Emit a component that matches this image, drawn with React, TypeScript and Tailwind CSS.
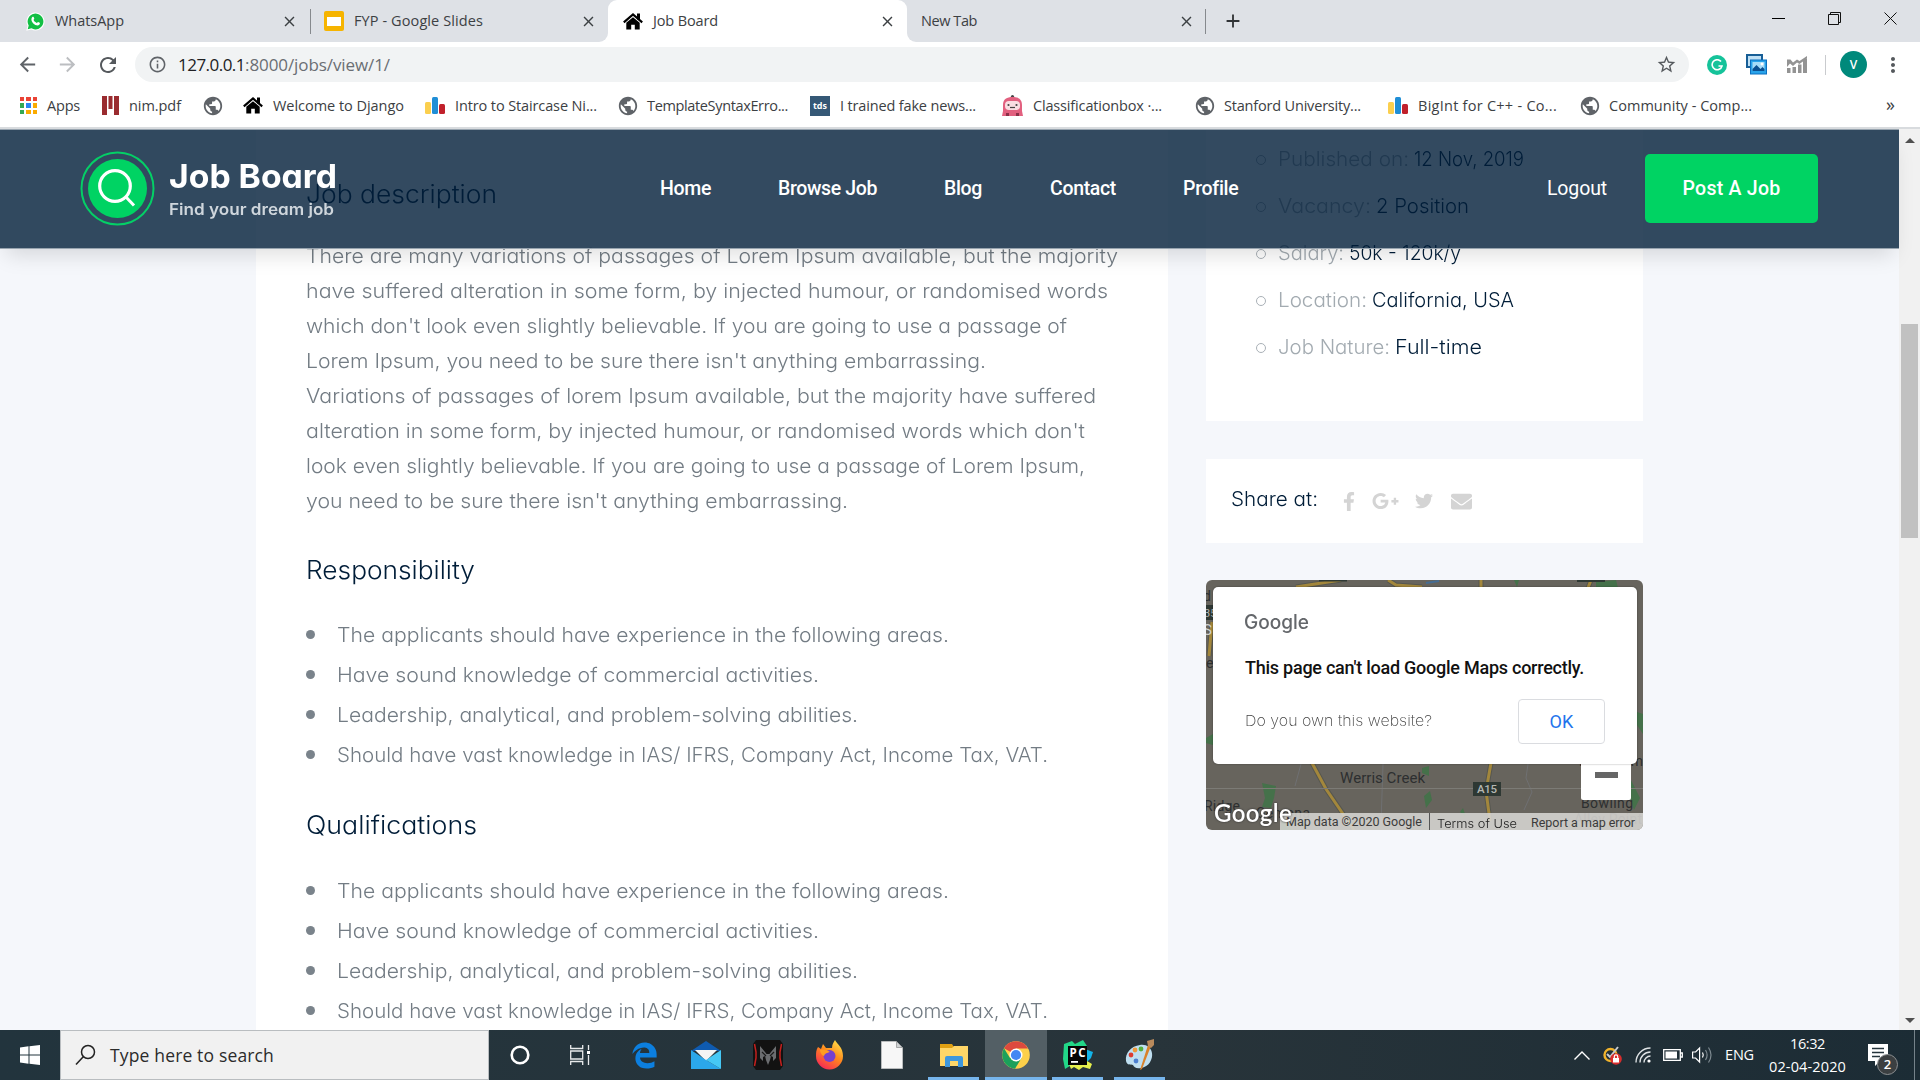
import React, { useLayoutEffect, useRef } from "react";
import { FaFacebookF, FaGooglePlusG, FaTwitter, FaEnvelope, FaEdgeLegacy } from "react-icons/fa";
import { MdArrowBack, MdArrowForward, MdRefresh, MdInfoOutline, MdStarBorder, MdMoreVert, MdPublic, MdClose, MdAdd } from "react-icons/md";

/* A single line of text whose tracking is adjusted so that it spans `w` pixels. */
function Line({ w, className = "", children }: { w: number; className?: string; children: string }) {
  const ref = useRef<HTMLSpanElement>(null);
  useLayoutEffect(() => {
    const el = ref.current;
    if (!el) return;
    el.style.letterSpacing = "0px";
    const natural = el.getBoundingClientRect().width;
    el.style.letterSpacing = `${(w - natural) / children.length}px`;
  }, [w, children]);
  return (
    <span ref={ref} className={`inline-block shrink-0 whitespace-nowrap ${className}`}>
      {children}
    </span>
  );
}

/* A single line of text whose letters are widened so that it spans `w` pixels. */
function Wide({ w, className = "", children }: { w: number; className?: string; children: string }) {
  const ref = useRef<HTMLSpanElement>(null);
  useLayoutEffect(() => {
    const el = ref.current;
    if (!el) return;
    el.style.transform = "none";
    const natural = el.getBoundingClientRect().width;
    el.style.transform = `scaleX(${w / natural})`;
  }, [w, children]);
  return (
    <span className={`block shrink-0 whitespace-nowrap ${className}`} style={{ width: w }}>
      <span ref={ref} className="inline-block origin-left">
        {children}
      </span>
    </span>
  );
}

const paragraph: [string, number][] = [
  ["There are many variations of passages of Lorem Ipsum available, but the majority", 812],
  ["have suffered alteration in some form, by injected humour, or randomised words", 802],
  ["which don't look even slightly believable. If you are going to use a passage of", 761],
  ["Lorem Ipsum, you need to be sure there isn't anything embarrassing.", 680],
  ["Variations of passages of lorem Ipsum available, but the majority have suffered", 790],
  ["alteration in some form, by injected humour, or randomised words which don't", 779],
  ["look even slightly believable. If you are going to use a passage of Lorem Ipsum,", 779],
  ["you need to be sure there isn't anything embarrassing.", 542],
];

const bullets: [string, number][] = [
  ["The applicants should have experience in the following areas.", 612],
  ["Have sound knowledge of commercial activities.", 482],
  ["Leadership, analytical, and problem-solving abilities.", 521],
  ["Should have vast knowledge in IAS/ IFRS, Company Act, Income Tax, VAT.", 711],
];

const summary: [string, number, string, number][] = [
  ["Published on:", 131, "12 Nov, 2019", 110],
  ["Vacancy:", 93, "2 Position", 93],
  ["Salary:", 66, "50k - 120k/y", 112],
  ["Location:", 89, "California, USA", 142],
  ["Job Nature:", 112, "Full-time", 87],
];

function Bars() {
  return (
    <svg width="20" height="17" viewBox="0 0 20 17">
      <rect x="0" y="5" width="6" height="12" rx="1.5" fill="#fbcf4e" />
      <rect x="7" y="0" width="6" height="17" rx="1.5" fill="#1f8ed6" />
      <rect x="14" y="7" width="6" height="10" rx="1.5" fill="#c1202b" />
    </svg>
  );
}

function AppsIcon() {
  const colors = ["#ea4335", "#ea4335", "#ea4335", "#34a853", "#2a85f4", "#fbab00", "#34a853", "#fbab00", "#fbab00"];
  return (
    <div className="grid h-[17px] w-[17px] grid-cols-3 gap-[2px]">
      {colors.map((c, i) => (
        <span key={i} style={{ backgroundColor: c }} />
      ))}
    </div>
  );
}

function NimIcon() {
  return (
    <svg width="17" height="19" viewBox="0 0 17 19" fill="#9a2b2f">
      <path d="M0 0h5v19H0zM6.5 0h4v13h-4zM12 0h5v19h-5z" />
    </svg>
  );
}

function RobotIcon() {
  return (
    <svg width="21" height="21" viewBox="0 0 21 21">
      <circle cx="10.5" cy="1.6" r="1.6" fill="#444" />
      <path d="M1 10C1 4 5 2 10.500 2S20 4 20 10v6l1 5H0l1-5z" fill="#e2607f" />
      <rect x="3" y="6" width="15" height="9" rx="4" fill="#f9dde2" />
      <circle cx="6.500" cy="10" r="1.100" fill="#444" />
      <circle cx="14.500" cy="10" r="1.100" fill="#444" />
      <path d="M8 12.500h5" stroke="#444" strokeWidth="1.200" />
      <path d="M4 18h3v3H4zM14 18h3v3h-3z" fill="#8c3048" />
    </svg>
  );
}

const Globe = () => <MdPublic className="-mx-[2px] size-[22px] text-[#5f6368]" />;

function House() {
  return (
    <svg className="shrink-0" width="20" height="17" viewBox="0 0 20 17">
      <path d="M14 .5h3v6h-3z" />
      <path d="M.8 9.300L10 1.500l9.200 7.800" fill="none" stroke="#000" strokeWidth="2.200" />
      <path d="M3.300 9.700L10 4.200l6.700 5.500V16.500H11.800v-4.700H8.200v4.700H3.300z" />
    </svg>
  );
}

function WhatsAppIcon() {
  return (
    <svg className="shrink-0" width="19" height="19" viewBox="0 0 19 19">
      <path d="M.3 18.700l1.300-4.900A9 9 0 1 1 5.200 17.400z" fill="#fff" />
      <path d="M1.700 17.300l1-3.800A7.900 7.900 0 1 1 5.500 16.300z" fill="#12bf44" />
      <path d="M6.300 5c.5-.5 1.100-.4 1.300.1l.7 1.500c.1.400-.7 1.100-.7 1.400.6 1.300 1.700 2.300 3.100 2.900.4.100 1-1 1.400-.9l1.600.8c.6.500 0 2.500-2 2.600-3.200-.1-6.300-3.300-6.300-6 0-1 .4-1.900.9-2.400z" fill="#fff" />
    </svg>
  );
}

function Bookmark({ icon, label, w, className }: { icon: React.ReactNode; label?: string; w?: number; className: string }) {
  return (
    <div className={`flex shrink-0 items-center ${className}`}>
      {icon}
      {label && w && (
        <Line w={w} className="ml-[10px] text-[14.500px] text-[#3c4043]">
          {label}
        </Line>
      )}
    </div>
  );
}

const CloseTab = ({ className = "" }: { className?: string }) => <MdClose className={`size-[17px] shrink-0 text-[#3c4043] ${className}`} />;

function TabStrip() {
  return (
    <div className="flex h-[42px] items-center bg-[#dee1e6] text-[14.500px] text-[#3c4043]">
      <div className="flex h-full w-[310px] items-center pl-[26px]">
        <WhatsAppIcon />
        <Line w={69} className="ml-[10px]">WhatsApp</Line>
        <CloseTab className="mr-[12px] ml-auto" />
      </div>
      <div className="h-[25px] w-px bg-[#86898d]" />
      <div className="flex h-full w-[297px] items-center pl-[13px]">
        <div className="flex h-[20px] w-[20px] items-center justify-center rounded-[2px] bg-[#f6b400]">
          <div className="h-[9px] w-[14px] bg-white" />
        </div>
        <Line w={129} className="ml-[10px]">FYP - Google Slides</Line>
        <CloseTab className="mr-[11px] ml-auto" />
      </div>
      <div className="relative flex h-full w-[299px] items-center rounded-t-[9px] bg-white pl-[15px]">
        <div className="absolute bottom-0 -left-[9px] size-[9px] bg-white">
          <div className="size-full rounded-br-[9px] bg-[#dee1e6]" />
        </div>
        <div className="absolute -right-[9px] bottom-0 size-[9px] bg-white">
          <div className="size-full rounded-bl-[9px] bg-[#dee1e6]" />
        </div>
        <House />
        <Line w={65} className="ml-[10px]">Job Board</Line>
        <CloseTab className="mr-[11px] ml-auto" />
      </div>
      <div className="flex h-full w-[298px] items-center pl-[14px]">
        <Line w={56}>New Tab</Line>
        <CloseTab className="mr-[10px] ml-auto" />
      </div>
      <div className="h-[25px] w-px bg-[#86898d]" />
      <MdAdd className="ml-[16px] size-[22px] text-[#303336]" />
      <div className="mr-[23px] ml-auto flex items-center gap-[43px] pb-[6px]">
        <div className="h-px w-[13px] bg-black" />
        <svg width="13" height="13" viewBox="0 0 13 13" fill="none" stroke="#111">
          <path d="M.5 2.500h10v10H.5zM2.500 2.500v-2h10v10h-2" />
        </svg>
        <svg width="13" height="13" viewBox="0 0 13 13" fill="none" stroke="#111">
          <path d="M.5.5l12 12M12.500.5l-12 12" />
        </svg>
      </div>
    </div>
  );
}

function AddressBar() {
  return (
    <div className="flex h-[45px] items-center bg-white">
      <MdArrowBack className="ml-[16px] size-[23px] text-[#5f6368]" />
      <MdArrowForward className="ml-[17px] size-[23px] text-[#bcbec1]" />
      <MdRefresh className="ml-[17px] size-[24px] text-[#55595d]" />
      <div className="ml-[15px] flex h-[35px] w-[1554px] items-center rounded-full bg-[#f1f3f4]">
        <MdInfoOutline className="ml-[13px] size-[19px] text-[#5f6368]" />
        <Line w={67} className="ml-[11px] text-[17px] text-[#202124]">127.0.0.1</Line>
        <Line w={145} className="text-[17px] text-[#6a6e73]">:8000/jobs/view/1/</Line>
        <MdStarBorder className="mr-[12px] ml-auto size-[21px] text-[#55595d]" />
      </div>
      <div className="ml-[18px] flex size-[20px] items-center justify-center rounded-full bg-[#15c39a]">
        <svg width="12" height="12" viewBox="0 0 12 12" fill="none" stroke="#fff" strokeWidth="1.600">
          <path d="M10 2.500A5 5 0 1 0 11 7H7.500" />
        </svg>
      </div>
      <svg className="ml-[19px]" width="21" height="21" viewBox="0 0 21 21">
        <rect x="1" y="1" width="15" height="12" fill="#bfe0f5" stroke="#175e96" strokeWidth="2" />
        <rect x="4.500" y="6" width="16" height="14" fill="#29a3ea" stroke="#0b6fc0" />
        <rect x="6.500" y="8" width="12" height="9" fill="#a5dbf8" />
        <path d="M6.500 17v-2l4-4 4 4 2-2 2 2v2z" fill="#0a4f91" />
        <circle cx="16" cy="10" r="1.500" fill="#fff" />
      </svg>
      <svg className="ml-[20px]" width="20" height="17" viewBox="0 0 20 17" fill="#939393">
        <path d="M0 12h3.500v5H0zM5.500 11H9v6H5.500zM11 8.500h3.500V17H11zM16 3h4v14h-4z" />
        <path d="M0 3.500h3.500l2.500 3 4-3 2.500 1.500L20 0v2.500L12.500 8 10 6.500 6 10 3 7.500 0 11z" />
      </svg>
      <div className="ml-[18px] h-[20px] w-px bg-[#c9cbce]" />
      <div className="ml-[14px] flex size-[27px] items-center justify-center rounded-full bg-[#00897b] text-[12px] font-semibold text-white">V</div>
      <MdMoreVert className="ml-[14px] size-[24px] text-[#55595d]" />
    </div>
  );
}

function Bookmarks() {
  return (
    <div className="flex h-[40px] items-center bg-white pb-[3px] pl-[20px]">
      <Bookmark className="w-[82px]" icon={<AppsIcon />} label="Apps" w={33} />
      <Bookmark className="w-[102px]" icon={<NimIcon />} label="nim.pdf" w={52} />
      <Bookmark className="w-[39px]" icon={<Globe />} />
      <Bookmark className="w-[182px]" icon={<House />} label="Welcome to Django" w={131} />
      <Bookmark className="w-[194px]" icon={<Bars />} label="Intro to Staircase Ni..." w={142} />
      <Bookmark className="w-[191px]" icon={<Globe />} label="TemplateSyntaxErro..." w={141} />
      <Bookmark
        className="w-[192px]"
        icon={<div className="flex size-[20px] items-center justify-center bg-[#355876] text-[9px] font-bold text-white">tds</div>}
        label="I trained fake news..."
        w={136}
      />
      <Bookmark className="w-[194px]" icon={<RobotIcon />} label="Classificationbox ·..." w={129} />
      <Bookmark className="w-[192px]" icon={<Globe />} label="Stanford University..." w={137} />
      <Bookmark className="w-[193px]" icon={<Bars />} label="BigInt for C++ - Co..." w={139} />
      <Bookmark className="w-[305px]" icon={<Globe />} label="Community - Comp..." w={143} />
      <span className="pb-[2px] text-[18px] text-[#3c4043]">»</span>
    </div>
  );
}

function SiteHeader() {
  return (
    <header className="absolute top-0 left-0 flex h-[120px] w-[1899px] items-center border-y border-[#98a4af] bg-[rgba(0,29,56,0.8)] bg-clip-padding pb-[2px] font-['Roboto',sans-serif] text-[19.500px] font-medium text-white shadow-[0_12px_20px_-6px_rgba(0,0,0,0.13)]">
      <svg className="ml-[80px] shrink-0" width="75" height="75" viewBox="0 0 75 75" fill="none">
        <circle cx="37.500" cy="37.500" r="36" stroke="#04cf66" strokeWidth="2" />
        <circle cx="37.500" cy="37.500" r="29.500" fill="#00d363" />
        <circle cx="35" cy="35" r="15.300" stroke="#fff" strokeWidth="3.200" />
        <path d="M45.500 45.500l8.500 9" stroke="#fff" strokeWidth="3" />
      </svg>
      <div className="ml-[14px] flex w-[168px] flex-col pt-[2px] font-['Inter',sans-serif] [font-feature-settings:'cv11']">
        <Wide w={168} className="text-[33px] leading-[40px] font-bold">Job Board</Wide>
        <Wide w={165} className="text-[16px] leading-[26px] font-semibold text-[#cfd6dc]">Find your dream job</Wide>
      </div>
      <nav className="ml-[323px] flex pt-[2px]">
        <div className="w-[118px]"><Line w={51}>Home</Line></div>
        <div className="w-[166px]"><Line w={99}>Browse Job</Line></div>
        <div className="w-[106px]"><Line w={38}>Blog</Line></div>
        <div className="w-[133px]"><Line w={66}>Contact</Line></div>
        <div className="w-[364px]"><Line w={55}>Profile</Line></div>
      </nav>
      <Line w={60} className="pt-[2px] font-normal">Logout</Line>
      <button className="ml-[38px] flex h-[69px] w-[173px] items-center justify-center rounded-[5px] bg-[#00d363] pt-[2px]">
        <Line w={98}>Post A Job</Line>
      </button>
    </header>
  );
}

const bodyFont = "font-['Inter',sans-serif] font-light [font-feature-settings:'cv11']";

function BulletList() {
  return (
    <ul>
      {bullets.map(([text, w]) => (
        <li key={text} className="flex h-[40px] items-center text-[20px] text-[#737c84]">
          <span className="mr-[22px] mb-[1px] size-[9px] shrink-0 rounded-full bg-[#7a838b]" />
          <Wide w={w}>{text}</Wide>
        </li>
      ))}
    </ul>
  );
}

function Description() {
  return (
    <section className="ml-[256px] h-[901px] w-[912px] shrink-0 overflow-hidden bg-white pt-[50px] pl-[50px]">
      <h4 className="h-[60px] text-[25px] leading-[30px] text-[#001d38]"><Wide w={191}>Job description</Wide></h4>
      <div className="flex flex-col text-[20px] leading-[35px] text-[#737c84]">
        {paragraph.map(([text, w]) => (
          <Wide key={text} w={w}>{text}</Wide>
        ))}
      </div>
      <h4 className="mt-[36px] mb-[30px] h-[30px] text-[25px] leading-[30px] text-[#001d38]"><Wide w={169}>Responsibility</Wide></h4>
      <BulletList />
      <h4 className="mt-[35px] mb-[31px] h-[30px] text-[25px] leading-[30px] text-[#001d38]"><Wide w={171}>Qualifications</Wide></h4>
      <BulletList />
    </section>
  );
}

function MapBackdrop() {
  return (
    <svg className="absolute inset-0" width="437" height="250" viewBox="0 0 437 250" fontFamily="Roboto, sans-serif">
      <rect width="437" height="250" fill="#67645d" />
      <g fill="#45714a">
        <path d="M0 158l7-4v11l-7-2zM56 203l14 3-2 12-3 10-9-1 3-9zM390 2l20-2 2 8h-22zM431 132l6 2v20l-6-9zM416 188l10 14 8 16-6 12-7-20zM218 216l6-5 2 9-6 8zM216 188l7-2v10l-7-3zM308 0h5l-2 7zM254 232l3-4 3 9zM75 238l12 12H75z" />
      </g>
      <g fill="none" stroke="#565750" strokeWidth="5">
        <path d="M106 183l14 26 28 41M285 183l-5 28 4 30M90 7l45-7M182 0l8 5 26 2M275 0v8M385 0l-3 8M6 42L3 76" />
      </g>
      <g fill="none" stroke="#a3873c" strokeWidth="3">
        <path d="M106 183l14 26 28 41M285 183l-5 28 4 30M90 7l45-7M182 0l8 5 26 2M275 0v8M385 0l-3 8M6 42L3 76" />
      </g>
      <path d="M95 184l-6 22M177 184l-2 60M322 184l-2 14 6 14-8 18" stroke="#6f7072" fill="none" />
      <path d="M0 208.500h437" stroke="#7c7b76" />
      <path d="M220 3l13-2" stroke="#456d94" strokeWidth="2" />
      <g fill="#2e3833">
        <path d="M113 0h28v1.500h-28zM371 0h28v2h-28zM0 25h7v15H0zM267 202h28v14h-28z" />
      </g>
      <text x="271" y="213" fontSize="11.500" fontWeight="500" fill="#b5b7b2" textLength="20">A15</text>
      <g fill="#2d2f30">
        <text x="134" y="203" fontSize="15" textLength="85">Werris Creek</text>
        <text x="-2" y="231" fontSize="14" textLength="36">Ridge</text>
        <text x="50" y="238" fontSize="14" textLength="54">Gemona</text>
        <text x="375" y="228" fontSize="14" textLength="52">Bowling</text>
        <text x="368" y="244" fontSize="14" textLength="68">Alley Point</text>
        <text x="373" y="186" fontSize="14" textLength="64">Nundlem</text>
        <text x="-3" y="21" fontSize="14">d</text>
        <text x="0" y="88" fontSize="14">e</text>
      </g>
      <text x="-2" y="37" fontSize="11" fill="#b5b7b2">35</text>
      <text x="-3" y="55" fontSize="15" fill="#d0d0cc">S</text>
    </svg>
  );
}

function MapCard() {
  return (
    <div className="relative mt-[37px] h-[250px] w-[437px] overflow-hidden rounded-[6px] font-['Roboto',sans-serif] font-normal">
      <MapBackdrop />
      <div className="absolute top-[180px] left-[375px] flex h-[40px] w-[50px] justify-center rounded-[2px] bg-white pt-[12px]">
        <div className="h-[6px] w-[23px] bg-[#666]" />
      </div>
      <div className="absolute right-0 bottom-0 flex h-[17px] w-[363px] items-center bg-[rgba(215,214,211,0.88)] pl-[6px] text-[12.500px] text-[#3b3b3b]">
        <Line w={136} className="pt-[2px]">Map data ©2020 Google</Line>
        <div className="mx-[7px] h-[17px] w-px bg-[#555]" />
        <Wide w={80} className="pt-[4px] font-['Inter',sans-serif] text-[12px] font-light text-[#222] [font-feature-settings:'cv11']">Terms of Use</Wide>
        <Line w={104} className="ml-[14px] pt-[4px]">Report a map error</Line>
      </div>
      <div className="absolute bottom-[3px] left-[8px] font-['Lato',sans-serif] text-[24px] leading-[28px] font-semibold text-white">
        <Line w={78} className="drop-shadow-[0_0_1px_#333]">Google</Line>
      </div>
      <div className="absolute top-[7px] left-[7px] h-[177px] w-[424px] rounded-[5px] bg-white pt-[20px] pr-[32px] pl-[31px] shadow-[0_0_2px_rgba(0,0,0,0.4)]">
        <Wide w={65} className="font-['Inter',sans-serif] text-[20px] leading-[30px] font-medium text-[#64676b] [font-feature-settings:'cv11']">Google</Wide>
        <Line w={339} className="mt-[19px] ml-[1px] block w-fit text-[18px] leading-[24px] font-medium text-[#111]">This page can't load Google Maps correctly.</Line>
        <div className="mt-[18px] flex items-center justify-between">
          <Wide w={187} className="ml-[1px] font-['Inter',sans-serif] text-[15px] font-extralight text-[#444] [font-feature-settings:'cv11']">Do you own this website?</Wide>
          <button className="flex h-[45px] w-[87px] items-center justify-center rounded-[4px] border border-[#dadce0] text-[18px] text-[#2374ec]">
            <Line w={24}>OK</Line>
          </button>
        </div>
      </div>
    </div>
  );
}

function Sidebar() {
  return (
    <aside className="ml-[38px] w-[437px] shrink-0">
      <div className="h-[292px] bg-white pt-[6px] pl-[50px] text-[20px]">
        {summary.map(([label, lw, value, vw]) => (
          <div key={label} className="flex h-[47px] items-center">
            <span className="mt-[3px] mr-[12px] size-[10px] rounded-full border border-[#aab1b7]" />
            <Wide w={lw} className="text-[#a3abb1]">{label}</Wide>
            <Wide w={vw} className="ml-[5px] text-[#001d38]">{value}</Wide>
          </div>
        ))}
      </div>
      <div className="mt-[38px] flex h-[84px] items-center bg-white pl-[25px] text-[#d4d4d4]">
        <Wide w={87} className="pb-[5px] text-[20px] text-[#001d38]">Share at:</Wide>
        <FaFacebookF className="ml-[25px] h-[19px] w-[12px]" />
        <FaGooglePlusG className="ml-[17px] h-[24px] w-[27px]" />
        <FaTwitter className="ml-[16px] size-[18px]" />
        <FaEnvelope className="ml-[18px] size-[21px]" />
      </div>
      <MapCard />
    </aside>
  );
}

function Scrollbar() {
  return (
    <div className="ml-auto flex h-[901px] w-[21px] shrink-0 flex-col items-center bg-[#f1f1f1]">
      <svg className="mt-[9px]" width="10" height="5" viewBox="0 0 10 5" fill="#505050"><path d="M0 5l5-5 5 5z" /></svg>
      <div className="mt-[181px] h-[214px] w-[17px] bg-[#c1c1c1]" />
      <svg className="mt-auto mb-[7px]" width="10" height="5" viewBox="0 0 10 5" fill="#505050"><path d="M0 0l5 5 5-5z" /></svg>
    </div>
  );
}

const taskIcons: { icon: React.ReactNode; state?: "open" | "active" }[] = [
  {
    icon: (
      <svg width="22" height="22" viewBox="0 0 22 22" fill="none" stroke="#fff" strokeWidth="2.600"><circle cx="11" cy="11" r="8.300" /></svg>
    ),
  },
  {
    icon: (
      <svg className="mr-[4px]" width="21" height="20" viewBox="0 0 21 20" fill="none" stroke="#e8eaeb" strokeWidth="1.300">
        <path d="M.7 0v3.500h12V0M.7 20v-3.500h12V20M.7 6h12v8h-12zM18.500 0v5M18.500 10v10" />
        <path d="M17 6h3v3h-3z" fill="#fff" stroke="none" />
      </svg>
    ),
  },
  { icon: <FaEdgeLegacy className="size-[27px] text-[#0c7fdf]" /> },
  {
    icon: (
      <svg width="30" height="28" viewBox="0 0 30 28">
        <path d="M0 10L15 0l15 10z" fill="#0f5bb0" />
        <path d="M4 9h22L15 20z" fill="#f4f4f4" />
        <path d="M0 9l15 10L30 28H0z" fill="#2ba7ea" />
        <path d="M30 9L15 19 30 28z" fill="#46c8f5" />
      </svg>
    ),
  },
  {
    icon: (
      <svg width="30" height="30" viewBox="0 0 30 30">
        <path d="M3 0h24l3 4v22l-3 4H3l-3-4V4z" fill="#121212" />
        <path d="M1.500 4L3 12v6L1.500 26M28.500 4L27 12v6l1.500 8" stroke="#c4201e" strokeWidth="1.500" fill="none" />
        <path d="M7 6l5 6 1.500 2h3L18 12l5-6v12l-3 3v-4l-2-1-1 4-2 5-2-5-1-4-2 1v4l-3-3z" fill="#6b6d70" />
        <path d="M9 12l4 4M21 12l-4 4" stroke="#1c1c1c" strokeWidth="1.200" />
      </svg>
    ),
  },
  {
    icon: (
      <svg width="30" height="30" viewBox="0 0 30 30">
        <defs>
          <linearGradient id="fox" x1="0.800" y1="0" x2="0.200" y2="1">
            <stop offset="0" stopColor="#ffe14a" />
            <stop offset="0.450" stopColor="#ff8a1c" />
            <stop offset="1" stopColor="#f5225a" />
          </linearGradient>
        </defs>
        <path d="M3 7l3 2 2-5 3 4 6 0c0-4 2-6 3-8 2 4 8 7 8 16a13.500 13.500 0 0 1-27 0C1 13 1 10 3 7z" fill="url(#fox)" />
        <circle cx="14.500" cy="16" r="6" fill="#7740d0" />
        <path d="M5 10c4-1 7 0 10 2-3 1-5 1-6 4-1 0-4-3-4-6z" fill="#ff9d22" />
      </svg>
    ),
  },
  {
    icon: (
      <svg width="22" height="28" viewBox="0 0 22 28">
        <path d="M.5.5h15l6 6v21H.5z" fill="#f7f7f7" stroke="#b9bcbd" />
        <path d="M15.500.5v6h6z" fill="#cfd2d3" stroke="#8a8d8e" strokeWidth=".7" />
      </svg>
    ),
  },
  {
    state: "open",
    icon: (
      <svg width="28" height="28" viewBox="0 0 28 28">
        <path d="M0 3h12l2 3v4H0z" fill="#e0a012" />
        <path d="M0 7h12l2-2h14v20H0z" fill="#ffd667" />
        <path d="M5 26V17a2 2 0 0 1 2-2h14a2 2 0 0 1 2 2v9h-5v-6h-8v6z" fill="#3e97dd" />
      </svg>
    ),
  },
  {
    state: "active",
    icon: (
      <svg width="28" height="28" viewBox="0 0 28 28">
        <circle cx="14" cy="14" r="13.800" fill="#fdd04a" />
        <path d="M14 14L2 7.200A13.800 13.800 0 0 1 26 7.500H14z" fill="#dd4a3e" />
        <path d="M2 7.200A13.800 13.800 0 0 0 13 27.800L19.500 17 14 14 8 17z" fill="#1ba05b" />
        <circle cx="14" cy="14" r="6.500" fill="#fff" />
        <circle cx="14" cy="14" r="5.100" fill="#4487f3" />
      </svg>
    ),
  },
  {
    state: "open",
    icon: (
      <svg width="30" height="30" viewBox="0 0 30 30">
        <path d="M1 4l8-3 3 3 8-4 4 6-2 6-12 12-8 5-2-10z" fill="#22d788" />
        <path d="M22 9l8 3-2 6-4 4z" fill="#12b4e8" />
        <path d="M6 24l18-3 5 3-2 5-7-2-4 3-5-3-3 2z" fill="#e5f04d" />
        <rect x="5" y="6" width="19" height="19" fill="#050505" />
        <path d="M8 21h7v1.800H8z" fill="#fff" />
        <text x="6.500" y="16.500" fontSize="11.500" fontWeight="700" fontFamily="Open Sans, sans-serif" fill="#fff" textLength="16">PC</text>
      </svg>
    ),
  },
  {
    state: "open",
    icon: (
      <svg width="30" height="32" viewBox="0 0 30 32">
        <path d="M15 6C6 7 0 14 1 22c1 5 5 3 7 4 1 2 3 4 8 3 8-1 12-9 11-15S21 5 15 6z" fill="#bfdff0" />
        <circle cx="6" cy="16" r="2.400" fill="#dc3c31" />
        <circle cx="10" cy="11" r="2.400" fill="#ee9a3e" />
        <circle cx="16" cy="10" r="2.400" fill="#54b03c" />
        <circle cx="11" cy="22" r="2.400" fill="#4c7fd0" />
        <path d="M23 6l3 1-9 23-2 1z" fill="#d9822b" />
        <path d="M22 2l7-2v6l-3 3-3-2z" fill="#b98a5c" />
      </svg>
    ),
  },
];

function Taskbar() {
  return (
    <footer className="flex h-[50px] items-center bg-gradient-to-r from-[#22343d] via-[#28343a] via-60% to-[#1c2c35] text-white">
      <div className="flex w-[60px] justify-center">
        <svg width="20" height="20" viewBox="0 0 20 20" fill="#fff">
          <path d="M0 2.500l8.500-1.200v8.200H0zM9.500 1.200L20 0v9.500H9.500zM0 10.500h8.500v8.200L0 17.500zM9.500 10.500H20V20L9.500 18.800z" />
        </svg>
      </div>
      <div className="flex h-full w-[429px] items-center border border-[#b9bdc0] bg-[#f1f1f1] pl-[14px]">
        <svg width="22" height="22" viewBox="0 0 22 22" fill="none" stroke="#222" strokeWidth="1.500">
          <circle cx="13" cy="8" r="6.500" />
          <path d="M8.500 12.500L1 20.500" />
        </svg>
        <Line w={164} className="ml-[13px] text-[17.500px] text-[#2b2b2b]">Type here to search</Line>
      </div>
      {taskIcons.map(({ icon, state }, i) => (
        <div key={i} className={`relative flex h-full w-[62px] shrink-0 items-center justify-center ${state === "active" ? "bg-[#535f65]" : ""}`}>
          {icon}
          {state === "open" && <div className="absolute bottom-0 left-[5px] h-[3px] w-[51px] bg-[#76b5ec]" />}
          {state === "active" && <div className="absolute bottom-0 left-0 h-[3px] w-[62px] bg-[#76b5ec]" />}
        </div>
      ))}
      <svg className="ml-[403px]" width="16" height="9" viewBox="0 0 16 9" fill="none" stroke="#fff" strokeWidth="1.400"><path d="M.5 8.500L8 1l7.500 7.500" /></svg>
      <svg className="ml-[13px]" width="19" height="19" viewBox="0 0 19 19" fill="none">
        <circle cx="7.500" cy="9" r="6" stroke="#f0b32c" strokeWidth="2.400" />
        <path d="M4 8l3 3 8-10" stroke="#c8ccd0" strokeWidth="2" />
        <circle cx="13" cy="13" r="5.800" fill="#d92d2d" />
        <rect x="10" y="12" width="6" height="4.500" fill="#fff" />
        <path d="M11.300 12v-1.500a1.700 1.700 0 0 1 3.400 0V12" stroke="#fff" strokeWidth="1.200" />
      </svg>
      <svg className="ml-[13px]" width="17" height="16" viewBox="0 0 17 16" fill="none" stroke="#dfe3e5" strokeWidth="1.400">
        <path d="M1 15.500A14.500 14.500 0 0 1 15.500 1M5 15.500A10.500 10.500 0 0 1 15.500 5M9 15.500A6.500 6.500 0 0 1 15.500 9" />
        <circle cx="14" cy="14" r="1.600" fill="#fff" stroke="none" />
      </svg>
      <svg className="ml-[11px]" width="20" height="12" viewBox="0 0 20 12" fill="none" stroke="#fff" strokeWidth="1.300">
        <path d="M.7.7h16.600v10.600H.7zM17.500 4h1.800v4h-1.800" />
        <path d="M2.500 2.500h11.500v7H2.500z" fill="#fff" stroke="none" />
      </svg>
      <svg className="ml-[9px]" width="21" height="18" viewBox="0 0 21 18" fill="none" stroke="#fff" strokeWidth="1.200">
        <path d="M.6 6h3l4-4v14l-4-4h-3zM10.500 6.500q1.500 2.500 0 5" />
        <path d="M13.500 4q3.200 5 0 10M16.500 1.500q5 7.500 0 15" stroke="#7d8990" />
      </svg>
      <Line w={29} className="ml-[12px] text-[14.500px]">ENG</Line>
      <div className="ml-[15px] flex w-[77px] flex-col items-center text-[14.500px] leading-[23px]">
        <Line w={35}>16:32</Line>
        <Line w={77}>02-04-2020</Line>
      </div>
      <div className="relative ml-[22px] h-[20px] w-[20px] shrink-0">
        <svg className="-mt-[1px]" width="20" height="22" viewBox="0 0 20 22">
          <path d="M0 0h20v17h-8l-5 5v-5H0z" fill="#fff" />
          <path d="M4 4.500h12M4 8.500h12M4 12.500h8" stroke="#25343c" strokeWidth="1.300" />
        </svg>
        <div className="absolute top-[9px] left-[9px] flex size-[21px] items-center justify-center rounded-full border border-[#8c8f91] bg-[#3b3f41] text-[13px] font-semibold">2</div>
      </div>
      <div className="mr-[5px] ml-auto h-full w-px bg-[#75828a]" />
    </footer>
  );
}

export default function App() {
  return (
    <div className="h-[1080px] w-[1920px] overflow-hidden bg-white font-['Open_Sans',sans-serif]">
      <TabStrip />
      <AddressBar />
      <Bookmarks />
      <div className="h-[2px] bg-[#d8dbde]" />
      <main className={`relative flex h-[901px] overflow-hidden bg-[#f5f7fb] ${bodyFont}`}>
        <Description />
        <Sidebar />
        <SiteHeader />
        <Scrollbar />
      </main>
      <Taskbar />
    </div>
  );
}
